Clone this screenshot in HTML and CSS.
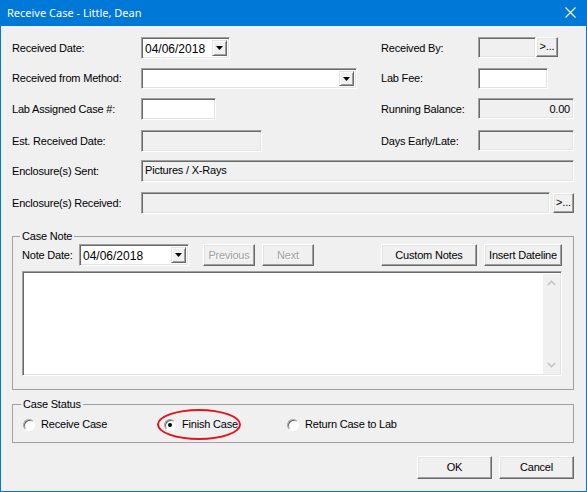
FILE: index.html
```html
<!DOCTYPE html>
<html>
<head>
<meta charset="utf-8">
<link rel="stylesheet" href="styles.css">
</head>
<body>
<div class="window">
  <div class="titlebar">
    <span class="title">Receive Case - Little, Dean</span>
    <svg class="close" width="11" height="11" viewBox="0 0 11 11"><path d="M0.5 0.5 L10.5 10.5 M10.5 0.5 L0.5 10.5" stroke="#fff" stroke-width="1.1" fill="none"/></svg>
  </div>
  <div class="content">
    <div class="row r1">
      <div class="left">
        <span class="lbl">Received Date:</span>
        <div class="field combo w-date"><span class="val">04/06/2018</span><span class="drop"><svg width="7" height="4" viewBox="0 0 7 4"><path d="M0 0H7L3.5 4Z" fill="#000"/></svg></span></div>
      </div>
      <div class="right">
        <span class="lbl rlbl">Received By:</span>
        <div class="field off w-by"></div>
        <div class="btn dots">&gt;...</div>
      </div>
    </div>
    <div class="row r2">
      <div class="left">
        <span class="lbl">Received from Method:</span>
        <div class="field combo w-method"><span class="val"></span><span class="drop"><svg width="7" height="4" viewBox="0 0 7 4"><path d="M0 0H7L3.5 4Z" fill="#000"/></svg></span></div>
      </div>
      <div class="right">
        <span class="lbl rlbl">Lab Fee:</span>
        <div class="field w-fee"></div>
      </div>
    </div>
    <div class="row r3">
      <div class="left">
        <span class="lbl">Lab Assigned Case #:</span>
        <div class="field w-case"></div>
      </div>
      <div class="right">
        <span class="lbl rlbl">Running Balance:</span>
        <div class="field off w-bal num">0.00</div>
      </div>
    </div>
    <div class="row r4">
      <div class="left">
        <span class="lbl">Est. Received Date:</span>
        <div class="field off w-est"></div>
      </div>
      <div class="right">
        <span class="lbl rlbl">Days Early/Late:</span>
        <div class="field off w-bal"></div>
      </div>
    </div>
    <div class="row r5">
      <span class="lbl">Enclosure(s) Sent:</span>
      <div class="field off w-sent text">Pictures / X-Rays</div>
    </div>
    <div class="row r6">
      <span class="lbl">Enclosure(s) Received:</span>
      <div class="field off w-recv"></div>
      <div class="btn dots dots2">&gt;...</div>
    </div>

    <fieldset class="group note">
      <legend>Case Note</legend>
      <div class="note-row">
        <span class="nlbl">Note Date:</span>
        <div class="field combo w-ndate"><span class="val">04/06/2018</span><span class="drop"><svg width="7" height="4" viewBox="0 0 7 4"><path d="M0 0H7L3.5 4Z" fill="#000"/></svg></span></div>
        <div class="btn nav disabled prev">Previous</div>
        <div class="btn nav disabled next">Next</div>
        <div class="spacer"></div>
        <div class="btn custom">Custom Notes</div>
        <div class="btn insert">Insert Dateline</div>
      </div>
      <div class="field memo">
        <div class="memo-text"></div>
        <div class="vscroll">
          <svg width="9" height="6" viewBox="0 0 9 6"><path d="M0.8 5 L4.5 1.3 L8.2 5" stroke="#c2c2c2" stroke-width="1.6" fill="none"/></svg>
          <svg width="9" height="6" viewBox="0 0 9 6"><path d="M0.8 1 L4.5 4.7 L8.2 1" stroke="#c2c2c2" stroke-width="1.6" fill="none"/></svg>
        </div>
      </div>
    </fieldset>

    <fieldset class="group status">
      <legend>Case Status</legend>
      <div class="radios">
        <div class="ritem r-receive"><span class="radio"></span><span>Receive Case</span></div>
        <div class="ritem r-finish"><span class="radio on"></span><span>Finish Case</span><span class="circle-mark"></span></div>
        <div class="ritem r-return"><span class="radio"></span><span>Return Case to Lab</span></div>
      </div>
    </fieldset>

    <div class="actions">
      <div class="btn act">OK</div>
      <div class="btn act">Cancel</div>
    </div>
  </div>
</div>
</body>
</html>
```
FILE: styles.css
```css
* { box-sizing: border-box; }
body {
  margin: 0;
  background: #fff;
  font-family: "Liberation Sans", Arial, sans-serif;
  font-size: 11px;
  letter-spacing: -0.2px;
  color: #000;
}
.window {
  width: 587px;
  height: 492px;
  background: #f0f0f0;
  border: 1px solid #0078d7;
  border-top: 0;
  display: flex;
  flex-direction: column;
}
.titlebar {
  height: 26px;
  background: #0078d7;
  margin: 0 -1px;
  display: flex;
  align-items: center;
  justify-content: space-between;
  padding: 0 11px 0 7px;
  flex-shrink: 0;
}
.title {
  color: #fff;
  font-family: "Noto Sans", "Open Sans", sans-serif;
  font-size: 11px;
  letter-spacing: 0;
  line-height: 14px;
  margin-top: -1px;
}
.close { margin-top: -1px; }
.content {
  padding: 0 12px 0 11px;
  display: flex;
  flex-direction: column;
}
.row {
  display: flex;
  align-items: flex-start;
  height: 22px;
}
.r1 { margin-top: 11px; }
.r2 { margin-top: 9px; height: 21px; }
.r3 { margin-top: 9px; }
.r4 { margin-top: 10px; }
.r5 { margin-top: 8px; }
.r6 { margin-top: 10px; }
.left {
  width: 369px;
  display: flex;
  align-items: flex-start;
  height: 100%;
}
.right {
  display: flex;
  align-items: flex-start;
  height: 100%;
}
.lbl {
  width: 129px;
  align-self: center;
  white-space: nowrap;
  line-height: 13px;
}
.rlbl { width: 97px; }
.field {
  height: 22px;
  background: #fff;
  border: 1px solid;
  border-color: #a0a0a0 #fff #fff #a0a0a0;
  box-shadow: inset 1px 1px 0 #696969, inset -1px -1px 0 #e3e3e3;
}
.field.off { background: #f0f0f0; }
.combo {
  display: flex;
  align-items: stretch;
  padding: 2px 2px 2px 3px;
}
.combo .val {
  flex: 1;
  display: flex;
  align-items: center;
  font-size: 12px;
  letter-spacing: 0;
  padding-top: 1px;
}
.drop {
  width: 15px;
  background: #f0f0f0;
  border: 1px solid;
  border-color: #e3e3e3 #696969 #696969 #e3e3e3;
  box-shadow: inset 1px 1px 0 #fff, inset -1px -1px 0 #a0a0a0;
  display: flex;
  align-items: center;
  justify-content: center;
}
.w-date { width: 89px; }
.w-method { width: 216px; height: 21px; }
.w-case { width: 75px; }
.w-est { width: 121px; }
.w-by { width: 58px; height: 21px; }
.w-fee { width: 70px; height: 21px; }
.w-bal { width: 96px; height: 21px; }
.w-sent { width: 433px; }
.w-recv { width: 409px; }
.w-ndate { width: 110px; }
.num {
  text-align: right;
  padding: 4px 3px 0 0;
  line-height: 13px;
}
.text {
  padding: 3px 0 0 3px;
  line-height: 13px;
}
.btn {
  background: #f0f0f0;
  border: 1px solid;
  border-color: #fff #696969 #696969 #fff;
  box-shadow: inset -1px -1px 0 #a0a0a0, inset 1px 1px 0 #e3e3e3;
  display: flex;
  align-items: center;
  justify-content: center;
  white-space: nowrap;
  line-height: 13px;
}
.dots {
  width: 22px;
  height: 20px;
  padding-bottom: 2px;
}
.dots2 { margin-left: 3px; margin-top: 1px; width: 21px; }
.group {
  margin: 0;
  border: 1px solid #a0a0a0;
  min-width: 0;
}
.group legend {
  padding: 0 2px;
  margin-left: -2px;
  line-height: 13px;
}
.note {
  margin-top: 16px;
  padding: 1px 11px 13px 9px;
}
.note-row {
  display: flex;
  align-items: flex-start;
  height: 22px;
}
.nlbl {
  width: 57px;
  align-self: center;
  line-height: 13px;
}
.nav {
  width: 52px;
  height: 22px;
}
.prev { margin-left: 14px; }
.next { margin-left: 7px; }
.disabled {
  color: #a0a0a0;
  text-shadow: 1px 1px 0 #fff;
}
.spacer { flex: 1; }
.custom { width: 96px; height: 22px; }
.insert { width: 78px; height: 22px; margin-left: 7px; }
.memo {
  margin-top: 5px;
  height: 105px;
  display: flex;
  padding: 2px 1px 1px 2px;
}
.memo-text { flex: 1; }
.vscroll {
  width: 17px;
  background: #f0f0f0;
  display: flex;
  flex-direction: column;
  align-items: center;
  justify-content: space-between;
  padding: 6px 0 6px;
}
.status {
  margin-top: 8px;
  padding: 7px 11px 11px 10px;
}
.radios {
  display: flex;
  align-items: center;
  height: 13px;
}
.ritem {
  display: flex;
  align-items: center;
  gap: 6px;
  line-height: 13px;
  position: relative;
}
.r-receive { width: 141px; }
.r-finish { width: 123px; }
.radio {
  width: 12px;
  height: 12px;
  border-radius: 50%;
  background: #fff;
  border: 1px solid;
  border-color: #a0a0a0 #fff #fff #a0a0a0;
  box-shadow: inset 1px 1px 0 #696969;
  display: flex;
  align-items: center;
  justify-content: center;
  flex-shrink: 0;
}
.radio.on::after {
  content: "";
  width: 4px;
  height: 4px;
  border-radius: 50%;
  background: #000;
}
.circle-mark {
  position: absolute;
  left: -7px;
  top: -9px;
  width: 84px;
  height: 31px;
  border: 2px solid #e3141c;
  border-radius: 50%;
}
.actions {
  margin-top: 13px;
  display: flex;
  justify-content: flex-end;
  gap: 7px;
}
.act {
  width: 75px;
  height: 23px;
}
```
